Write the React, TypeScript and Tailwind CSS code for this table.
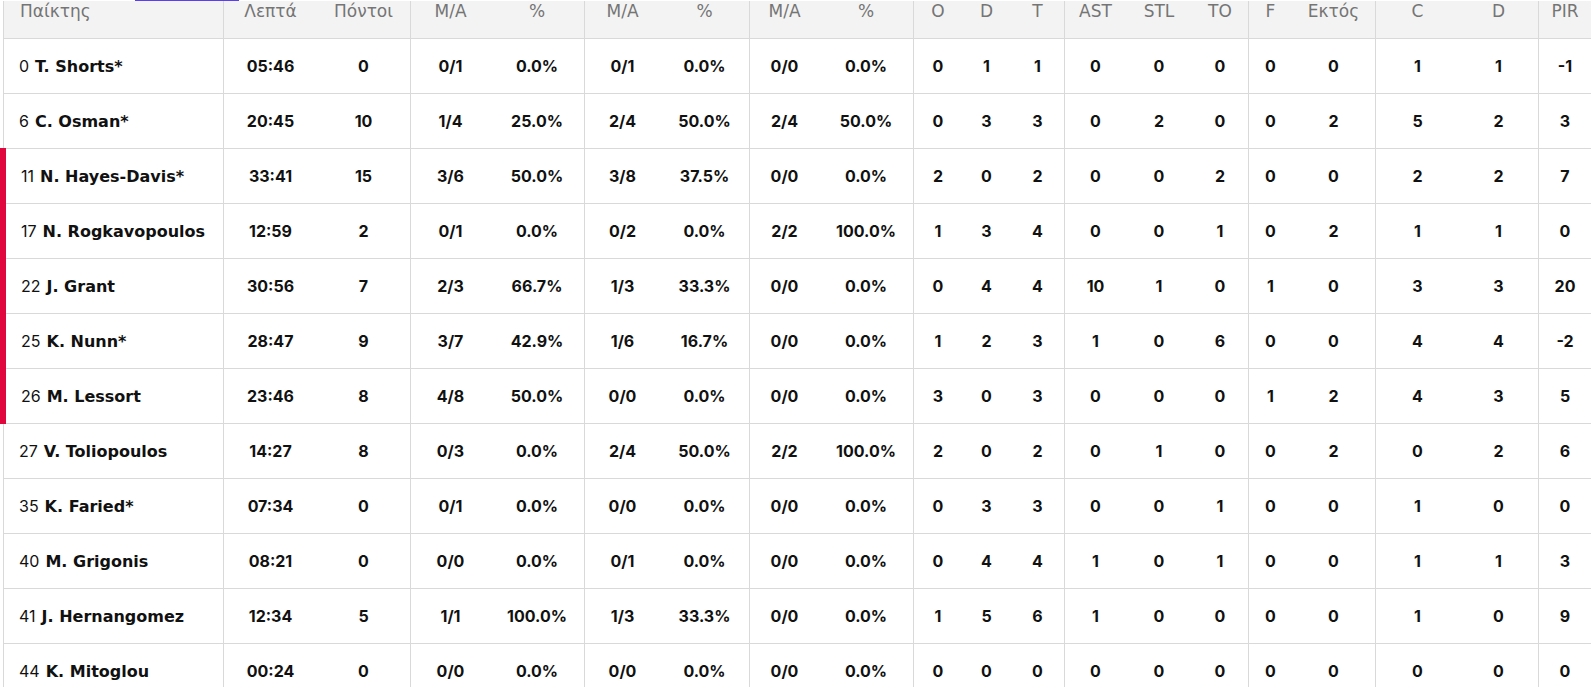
import React from "react";

type Row = {
  no: string;
  name: string;
  on: boolean;
  v: string[];
};

const rows: Row[] = [
  { no: "0", name: "T. Shorts*", on: false, v: ["05:46", "0", "0/1", "0.0%", "0/1", "0.0%", "0/0", "0.0%", "0", "1", "1", "0", "0", "0", "0", "0", "1", "1", "-1"] },
  { no: "6", name: "C. Osman*", on: false, v: ["20:45", "10", "1/4", "25.0%", "2/4", "50.0%", "2/4", "50.0%", "0", "3", "3", "0", "2", "0", "0", "2", "5", "2", "3"] },
  { no: "11", name: "N. Hayes-Davis*", on: true, v: ["33:41", "15", "3/6", "50.0%", "3/8", "37.5%", "0/0", "0.0%", "2", "0", "2", "0", "0", "2", "0", "0", "2", "2", "7"] },
  { no: "17", name: "N. Rogkavopoulos", on: true, v: ["12:59", "2", "0/1", "0.0%", "0/2", "0.0%", "2/2", "100.0%", "1", "3", "4", "0", "0", "1", "0", "2", "1", "1", "0"] },
  { no: "22", name: "J. Grant", on: true, v: ["30:56", "7", "2/3", "66.7%", "1/3", "33.3%", "0/0", "0.0%", "0", "4", "4", "10", "1", "0", "1", "0", "3", "3", "20"] },
  { no: "25", name: "K. Nunn*", on: true, v: ["28:47", "9", "3/7", "42.9%", "1/6", "16.7%", "0/0", "0.0%", "1", "2", "3", "1", "0", "6", "0", "0", "4", "4", "-2"] },
  { no: "26", name: "M. Lessort", on: true, v: ["23:46", "8", "4/8", "50.0%", "0/0", "0.0%", "0/0", "0.0%", "3", "0", "3", "0", "0", "0", "1", "2", "4", "3", "5"] },
  { no: "27", name: "V. Toliopoulos", on: false, v: ["14:27", "8", "0/3", "0.0%", "2/4", "50.0%", "2/2", "100.0%", "2", "0", "2", "0", "1", "0", "0", "2", "0", "2", "6"] },
  { no: "35", name: "K. Faried*", on: false, v: ["07:34", "0", "0/1", "0.0%", "0/0", "0.0%", "0/0", "0.0%", "0", "3", "3", "0", "0", "1", "0", "0", "1", "0", "0"] },
  { no: "40", name: "M. Grigonis", on: false, v: ["08:21", "0", "0/0", "0.0%", "0/1", "0.0%", "0/0", "0.0%", "0", "4", "4", "1", "0", "1", "0", "0", "1", "1", "3"] },
  { no: "41", name: "J. Hernangomez", on: false, v: ["12:34", "5", "1/1", "100.0%", "1/3", "33.3%", "0/0", "0.0%", "1", "5", "6", "1", "0", "0", "0", "0", "1", "0", "9"] },
  { no: "44", name: "K. Mitoglou", on: false, v: ["00:24", "0", "0/0", "0.0%", "0/0", "0.0%", "0/0", "0.0%", "0", "0", "0", "0", "0", "0", "0", "0", "0", "0", "0"] },
];

const headers = ["Λεπτά", "Πόντοι", "M/A", "%", "M/A", "%", "M/A", "%", "O", "D", "T", "AST", "STL", "TO", "F", "Εκτός", "C", "D", "PIR"];

// index in v[] (0-based) of cells that end a group and carry a right border
const groupEnd = new Set([1, 3, 5, 7, 10, 13, 15, 17, 18]);

const gridCols =
  "grid grid-cols-[220px_93px_94px_79px_95px_75px_90px_69px_95px_48px_49px_54px_61px_66px_57px_43px_84px_83px_80px_53px]";

export default function App() {
  return (
    <div
      className="w-[1591px] h-[687px] overflow-hidden bg-white relative"
      style={{ fontFamily: "Inter, 'Noto Sans', sans-serif" }}
    >
      <div className="absolute left-[135px] top-0 w-[104px] h-px bg-[#5b3ef2] z-10" />
      <div className="pt-px pl-[3px]">
        {/* header */}
        <div
          className={`${gridCols} h-[38px] bg-[#f3f3f3] border-l border-b border-[#d9d9d9] text-[17px] leading-[20px] font-normal text-[#757575] font-['DejaVu_Sans',sans-serif]`}
        >
          <div className="border-r border-[#d9d9d9] pl-4">Παίκτης</div>
          {headers.map((h, i) => (
            <div key={i} className={`text-center ${groupEnd.has(i) ? "border-r border-[#d9d9d9]" : ""}`}>
              {h}
            </div>
          ))}
        </div>
        {rows.map((r, ri) => (
          <div
            key={ri}
            className={`${gridCols} relative h-[55px] border-l border-b border-[#d9d9d9] text-[16px] text-[#111111]`}
          >
            {r.on && <div className="absolute -left-[4px] -top-px bottom-[-1px] w-[6px] bg-[#e0073f]" />}
            <div className={`flex items-center border-r border-[#d9d9d9] whitespace-nowrap ${r.on ? "pl-[17px]" : "pl-[15px]"}`}>
              <span className="leading-6">
                <span className="font-normal">{r.no}</span>
                <span className="font-bold ml-[6px] font-['DejaVu_Sans',sans-serif]">{r.name}</span>
              </span>
            </div>
            {r.v.map((val, i) => (
              <div
                key={i}
                className={`flex items-center justify-center font-bold ${groupEnd.has(i) ? "border-r border-[#d9d9d9]" : ""}`}
              >
                {val}
              </div>
            ))}
          </div>
        ))}
      </div>
    </div>
  );
}
